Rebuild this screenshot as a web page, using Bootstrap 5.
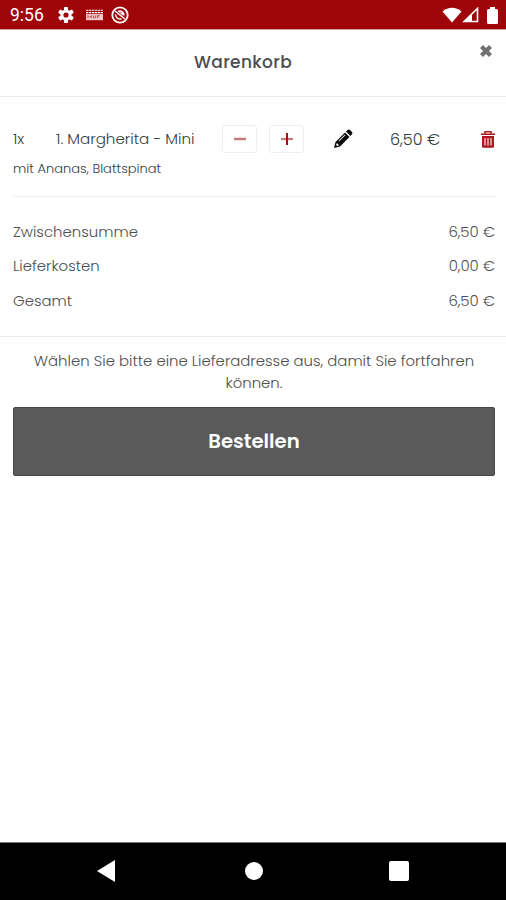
<!DOCTYPE html>
<html lang="de">
<head>
<meta charset="utf-8">
<meta name="viewport" content="width=device-width, initial-scale=1">
<title>Warenkorb</title>
<link rel="stylesheet" href="https://cdn.jsdelivr.net/npm/bootstrap@5.3.0/dist/css/bootstrap.min.css">
<style>
body{font-family:Poppins,Inter,"Open Sans",sans-serif;font-size:14.9px;font-weight:300;color:#4e4e4e;line-height:22px;height:900px;overflow:hidden}
svg{display:block;flex:none}
.status-bar{height:30px;background:#9e0408;border-bottom:1px solid #d9a0a0;padding:1px 8px 0 10px}
.clock{font:400 17.5px/29px Roboto,sans-serif;width:48px;padding-top:1px}
.cart-head{height:67px;border-bottom:1px solid #e9e9e9;padding:0 20px 2px 0}
.cart-title{font-size:17px;font-weight:500;letter-spacing:.35px;color:#4d4d4d;line-height:24px}
.cart-close{position:absolute;right:13px;top:14px}
.cart-item{margin:0 11px 0 13px;height:100px;padding-top:28px;border-bottom:1px solid #efefef;color:#2f3e46}
.item-row{height:28px}
.qty{width:43px}
.item-name{width:166px;font-size:15.1px}
.step{width:35px;height:28px;border:1px solid #f0eeee;border-radius:3px;background:#fff}
.step-plus{margin-left:12px}
.extras{font-size:13px;line-height:20px;margin-top:6px}
.price{width:50px;font-size:16px;margin-left:37px;padding-top:1px}
.trash{margin-left:41px}
.sums{padding:18px 11px 19px 13px;border-bottom:1px solid #e9e9e9;height:140px}
.sum-row{height:34.3px}
.notice{padding:13px 18px 0 20px;height:70px}
.order{margin:0 11px 0 13px;height:69px;background:#5a5a5a;border:1px solid #464646;border-radius:2px;color:#fff;font-size:19.7px;font-weight:600}
.nav-keys{height:58px;background:#000;border-top:1px solid #777;padding:0 97px 2px}
</style>
</head>
<body class="d-flex flex-column bg-white">
<header class="status-bar d-flex align-items-center text-white">
  <span class="clock">9:56</span>
  <svg width="16" height="16" viewBox="0 0 16 16"><g fill="#fff"><circle cx="8" cy="8" r="5.6"/><rect x="6" y="0" width="4" height="16" rx=".8"/><rect x="6" y="0" width="4" height="16" rx=".8" transform="rotate(60 8 8)"/><rect x="6" y="0" width="4" height="16" rx=".8" transform="rotate(120 8 8)"/></g><circle cx="8" cy="8" r="2.6" fill="#9e0408"/></svg>
  <svg class="ms-2 ps-1" width="21" height="12" viewBox="0 0 18 12"><path d="M0 1h18M0 3.500h18" fill="none" stroke="#fff" stroke-width="1.200" stroke-dasharray="2.500 .6"/><path d="M0 5h18v6.500H0z" fill="#f3c9ca"/><path d="M2 9.500V6.500l2 2 2-2v3m2-3v2.500h2V6.500m2 3V6.500h2.500M12 8h2" fill="none" stroke="#b8474b" stroke-width=".9"/></svg>
  <svg class="ms-2" width="18" height="18" viewBox="0 0 18 18" fill="none" stroke="#fff"><circle cx="9" cy="9" r="7.700" stroke-width="1.800"/><path d="M4 5l10 8" stroke-width="1.600"/><path d="M7 5.500c3-1.500 6 .5 6 4M4.500 8.500c.5 3.500 3 5 6 4.500" stroke-width="1.500"/><path d="M7.500 6l4.500 1v2.500z" fill="#fff" stroke="none"/></svg>
  <svg class="ms-auto" width="20" height="16" viewBox="0 0 20 16"><path d="M.5 4.500C6-.5 14-.5 19.500 4.500L10 15.500z" fill="#fff"/></svg>
  <svg width="17" height="16" viewBox="0 0 17 16"><path d="M2 14.500L15.500 1.500v13z" fill="none" stroke="#fff" stroke-width="1.600"/><path d="M2 14.500l8-8v8z" fill="#fff"/></svg>
  <svg class="ms-2" width="11" height="17" viewBox="0 0 11 17"><path d="M3 0h5v2h1.500q1.500 0 1.500 1.500v12q0 1.500-1.500 1.500h-8Q0 17 0 15.500v-12Q0 2 1.500 2H3z" fill="#fff"/></svg>
</header>
<section class="cart-head position-relative d-flex justify-content-center align-items-center">
  <h1 class="cart-title m-0">Warenkorb</h1>
  <svg class="cart-close" width="14" height="14" viewBox="0 0 14 14"><path d="M2.500 2.500l9 9m0-9l-9 9" stroke="#707070" stroke-width="4.200"/></svg>
</section>
<main class="flex-grow-1">
  <section class="cart-item">
    <div class="item-row d-flex align-items-center">
      <span class="qty">1x</span><span class="item-name text-nowrap">1. Margherita - Mini</span>
      <button class="step btn p-0 d-flex align-items-center justify-content-center" aria-label="Weniger"><svg width="12" height="12" viewBox="0 0 12 12"><path d="M0 6h12" stroke="#c6797d" stroke-width="2.500"/></svg></button>
      <button class="step step-plus btn p-0 d-flex align-items-center justify-content-center" aria-label="Mehr"><svg width="12" height="12" viewBox="0 0 12 12"><path d="M0 6h12" stroke="#c6797d" stroke-width="2.200"/><path d="M6 0v12" stroke="#a80d14" stroke-width="2"/></svg></button>
      <svg class="ms-auto" width="20" height="20" viewBox="0 0 20 20"><path d="M1 19l1.500-6L12 3.500 16.500 8 7 17.500z" fill="#0b0b0b"/><path d="M13 2.500l2-1.800q1-.7 2 .2l2 2q.9 1 .1 2L17.500 7z" fill="#0b0b0b"/><path d="M3.800 14l2.300 2.300-2 .7-1-1z" fill="#fff"/><path d="M6 11.800l6-6" stroke="#ddd" stroke-width="1.100"/></svg>
      <span class="price text-nowrap">6,50 €</span>
      <svg class="trash" width="14" height="17" viewBox="0 0 14 17"><path d="M4 2.500V.8h6v1.700M0 3.200h14" fill="none" stroke="#ad1820" stroke-width="1.500"/><path d="M1 5h12v10.500q0 1.300-1.300 1.300H2.300Q1 16.800 1 15.500z" fill="#ad1820"/><path d="M4 7v7.500m3-7.500v7.500m3-7.500v7.500" stroke="#fbe4e4" stroke-width="1.200"/></svg>
    </div>
    <div class="extras">mit Ananas, Blattspinat</div>
  </section>
  <section class="sums">
    <div class="sum-row d-flex justify-content-between align-items-center"><span>Zwischensumme</span><span>6,50 €</span></div>
    <div class="sum-row d-flex justify-content-between align-items-center"><span>Lieferkosten</span><span>0,00 €</span></div>
    <div class="sum-row d-flex justify-content-between align-items-center"><span>Gesamt</span><span>6,50 €</span></div>
  </section>
  <p class="notice text-center m-0">Wählen Sie bitte eine Lieferadresse aus, damit Sie fortfahren können.</p>
  <div class="d-grid"><button class="order btn p-0">Bestellen</button></div>
</main>
<nav class="nav-keys d-flex align-items-center justify-content-between">
  <svg width="18" height="22" viewBox="0 0 18 22"><path d="M0 11L18 0v22z" fill="#fff"/></svg>
  <svg class="ms-1" width="18" height="18" viewBox="0 0 18 18"><circle cx="9" cy="9" r="9" fill="#fff"/></svg>
  <svg width="20" height="20" viewBox="0 0 20 20"><rect width="20" height="20" rx="2" fill="#fff"/></svg>
</nav>
</body>
</html>
